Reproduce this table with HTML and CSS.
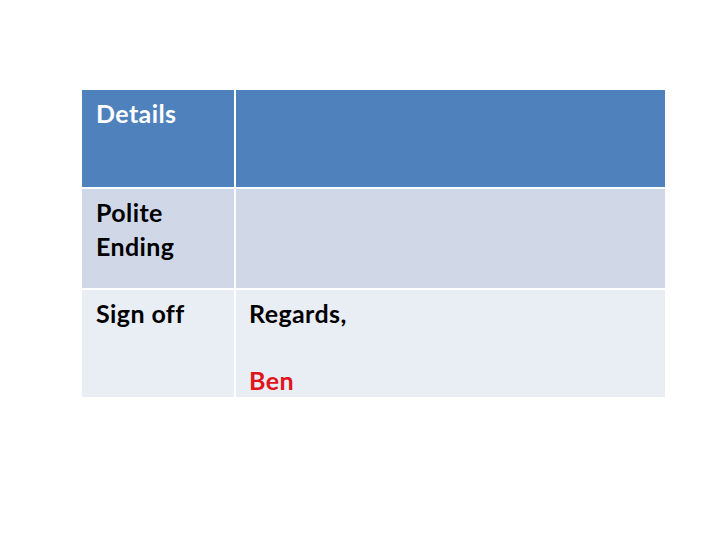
FILE: index.html
```html
<!DOCTYPE html>
<html>
<head>
<meta charset="utf-8">
<link rel="stylesheet" href="styles.css">
</head>
<body>
<div class="slide">
  <div class="table">
    <div class="cell head">Details</div>
    <div class="cell head"></div>
    <div class="cell odd">Polite<br>Ending</div>
    <div class="cell odd"></div>
    <div class="cell even">Sign off</div>
    <div class="cell even">Regards,<br><br><span class="name">Ben</span></div>
  </div>
</div>
</body>
</html>
```
FILE: styles.css
```css
html, body {
  margin: 0;
  padding: 0;
  background: #ffffff;
}
.slide {
  width: 720px;
  height: 540px;
  padding: 90px 0 0 82px;
  box-sizing: border-box;
}
.table {
  display: grid;
  grid-template-columns: 152px 429px;
  grid-template-rows: 97px 99px 107px;
  column-gap: 2px;
  row-gap: 2px;
  width: 583px;
}
.cell {
  font-family: Lato, "Liberation Sans", sans-serif;
  font-weight: bold;
  font-size: 25px;
  letter-spacing: 0.4px;
  line-height: 33.5px;
  color: #000000;
  padding: 7px 0 0 14px;
  box-sizing: border-box;
  overflow: visible;
}
.head {
  background: #4f81bd;
  color: #ffffff;
}
.odd {
  background: #d0d8e8;
}
.even {
  background: #e9edf4;
}
.cell.even + .cell.even {
  padding-left: 13px;
}
.name {
  color: #e0141a;
}
```
